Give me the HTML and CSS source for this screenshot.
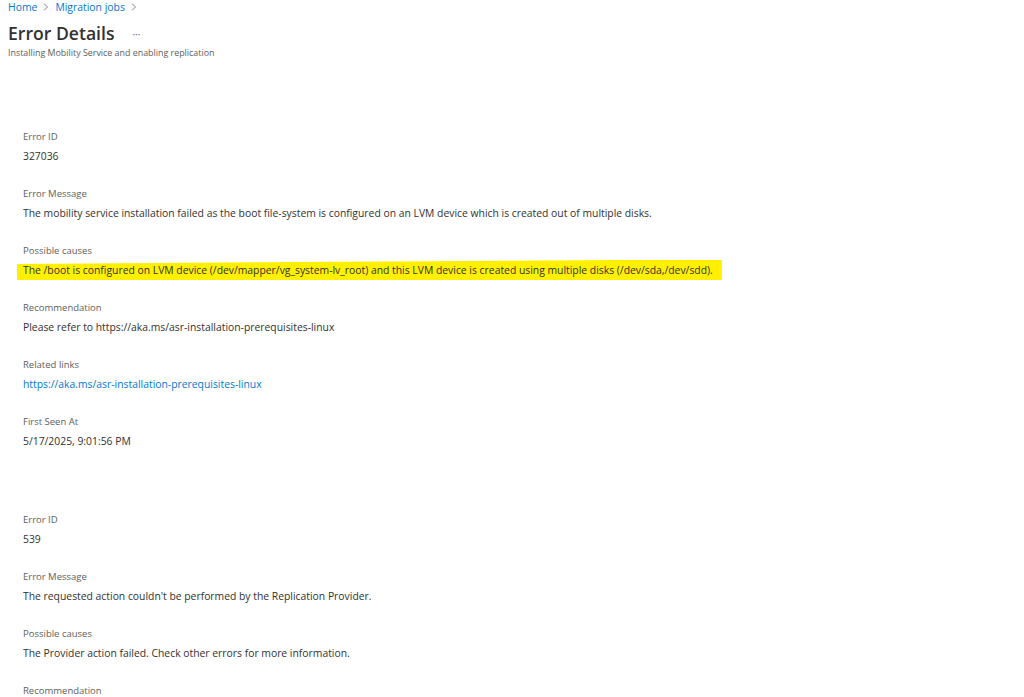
FILE: index.html
```html
<!DOCTYPE html>
<html>
<head>
<meta charset="utf-8">
<link rel="stylesheet" href="styles.css">
</head>
<body>
<div class="page">
  <nav class="crumbs">
    <a class="crumb">Home</a>
    <span class="chev"><svg width="8" height="10" viewBox="0 0 8 10"><path d="M2 1.5 L5.5 5 L2 8.5" fill="none" stroke="#8a8886" stroke-width="1"/></svg></span>
    <a class="crumb">Migration jobs</a>
    <span class="chev"><svg width="8" height="10" viewBox="0 0 8 10"><path d="M2 1.5 L5.5 5 L2 8.5" fill="none" stroke="#8a8886" stroke-width="1"/></svg></span>
  </nav>
  <header class="head">
    <div class="title-row">
      <h1 class="title">Error Details</h1>
      <span class="more">···</span>
    </div>
    <div class="subtitle">Installing Mobility Service and enabling replication</div>
  </header>

  <section class="error">
    <div class="field"><div class="label">Error ID</div><div class="value">327036</div></div>
    <div class="field"><div class="label">Error Message</div><div class="value">The mobility service installation failed as the boot file-system is configured on an LVM device which is created out of multiple disks.</div></div>
    <div class="field"><div class="label">Possible causes</div><div class="value"><span class="marker">The /boot is configured on LVM device (/dev/mapper/vg_system-lv_root) and this LVM device is created using multiple disks (/dev/sda,/dev/sdd).</span></div></div>
    <div class="field"><div class="label">Recommendation</div><div class="value">Please refer to https://aka.ms/asr-installation-prerequisites-linux</div></div>
    <div class="field"><div class="label">Related links</div><div class="value"><a class="link">https://aka.ms/asr-installation-prerequisites-linux</a></div></div>
    <div class="field"><div class="label">First Seen At</div><div class="value">5/17/2025, 9:01:56 PM</div></div>
  </section>

  <section class="error second">
    <div class="field"><div class="label">Error ID</div><div class="value">539</div></div>
    <div class="field"><div class="label">Error Message</div><div class="value">The requested action couldn't be performed by the Replication Provider.</div></div>
    <div class="field"><div class="label">Possible causes</div><div class="value">The Provider action failed. Check other errors for more information.</div></div>
    <div class="field"><div class="label">Recommendation</div><div class="value"></div></div>
  </section>
</div>
</body>
</html>
```

FILE: styles.css
```css
html, body {
  margin: 0;
  padding: 0;
  background: #ffffff;
  font-family: "Open Sans", "Noto Sans", "Liberation Sans", sans-serif;
  color: #323130;
}

.page {
  padding: 0 0 0 8px;
}

.crumbs {
  display: flex;
  align-items: center;
  height: 14px;
  font-size: 10.4px;
}

.crumb {
  color: #0078d4;
  line-height: 14px;
}

.chev {
  display: inline-flex;
  width: 18px;
  justify-content: center;
  align-items: center;
}

.head {
  padding-top: 6px;
}

.title-row {
  display: flex;
  align-items: center;
  height: 27px;
}

.title {
  margin: 0;
  font-size: 17.6px;
  font-weight: 600;
  color: #323130;
  line-height: 27px;
}

.more {
  margin-left: 18px;
  font-size: 10px;
  color: #605e5c;
}

.subtitle {
  font-size: 8.9px;
  color: #605e5c;
  line-height: 12px;
}

.error {
  padding-left: 15px;
  padding-top: 68px;
  display: flex;
  flex-direction: column;
  gap: 18px;
}

.error.second {
  padding-top: 59px;
}

.field {
  display: flex;
  flex-direction: column;
}

.label {
  font-size: 9.5px;
  color: #605e5c;
  line-height: 20px;
  height: 19px;
}

.value {
  font-size: 10.37px;
  color: #323130;
  line-height: 20px;
  height: 20px;
  white-space: nowrap;
}

.link {
  color: #0078d4;
}

.marker {
  background: #fff000;
  padding: 3px 9px 3px 6px;
  margin-left: -6px;
  clip-path: polygon(0 4px, 40% 2px, 85% 0, 100% 0, 100% 100%, 60% 100%, 0 100%);
}
```
